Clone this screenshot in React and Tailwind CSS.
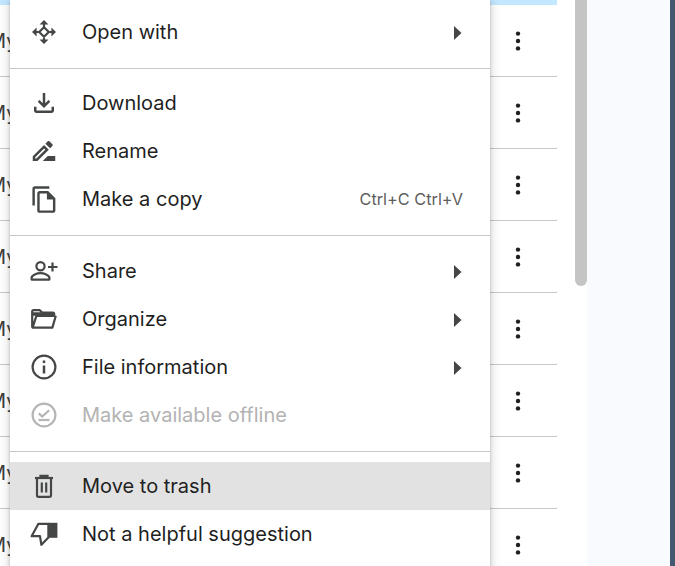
const FONT = "font-['Inter',sans-serif]";

const rows = [0, 1, 2, 3, 4, 5, 6, 7];

function Dots() {
  return (
    <svg width="30" height="30" viewBox="0 0 30 30" fill="#1f1f1f" className="shrink-0">
      <circle cx="15" cy="7.6" r="2.2" />
      <circle cx="15" cy="15" r="2.2" />
      <circle cx="15" cy="22.4" r="2.2" />
    </svg>
  );
}

function Arrow() {
  return (
    <svg width="8" height="14" viewBox="0 0 8 14" fill="#444746" className="mt-[2px] shrink-0">
      <path d="M0 0l7.5 7L0 14z" />
    </svg>
  );
}

const OpenWith = () => (
  <svg width="24" height="24" viewBox="0 0 24 24" fill="#444746">
    <path d="M12 0l4.5 4.6h-9zM12 24l-4.5-4.6h9zM0 12l4.6-4.5v9zM24 12l-4.6-4.5v9z" />
    <path d="M12 4v3.4M12 16.6V20M4 12h3.4M16.6 12H20M12 7.2L16.8 12 12 16.8 7.2 12z" fill="none" stroke="#444746" strokeWidth="2.2" />
  </svg>
);
const DownloadI = () => (
  <svg width="30" height="30" viewBox="0 0 24 24" fill="#444746">
    <path d="M18 15v3H6v-3H4v3c0 1.1.9 2 2 2h12c1.1 0 2-.9 2-2v-3h-2zm-1-4l-1.41-1.41L13 12.17V4h-2v8.17L8.41 9.59 7 11l5 5 5-5z" />
  </svg>
);
const RenameI = () => (
  <svg width="30" height="30" viewBox="0 0 24 24" fill="#444746">
    <path d="M15 16l-4 4h10v-4h-6zM12.06 7.19L3 16.25V20h3.75l9.06-9.06-3.75-3.75zM5.92 18H5v-.92l7.06-7.06.92.92L5.92 18zM18.71 8.04c.39-.39.39-1.02 0-1.41l-2.34-2.34a.9959.9959 0 0 0-1.41 0l-1.83 1.83 3.75 3.75 1.83-1.83z" />
  </svg>
);
const CopyI = () => (
  <svg width="29" height="29" viewBox="0 0 24 24" fill="#444746">
    <path d="M16 1H4c-1.1 0-2 .9-2 2v14h2V3h12V1zm-1 4H8c-1.1 0-1.99.9-1.99 2L6 21c0 1.1.89 2 1.99 2H19c1.1 0 2-.9 2-2V11l-6-6zM8 21V7h6v5h5v9H8z" />
  </svg>
);
const ShareI = () => (
  <svg width="28" height="20" viewBox="0 0 28 20" fill="none" stroke="#444746" strokeWidth="2.2">
    <circle cx="10.5" cy="5.3" r="4.1" />
    <path d="M1.6 18.6v-1.8c0-2.8 5.6-4.6 8.9-4.6s8.9 1.8 8.9 4.6v1.8z" strokeLinejoin="round" />
    <path d="M22.5 1.5v9M18 6h9.5" />
  </svg>
);
const FolderI = () => (
  <svg width="26" height="20" viewBox="0 0 26 20" fill="none" stroke="#444746" strokeWidth="2.2" strokeLinejoin="round">
    <path d="M1.2 18.6V2.6c0-.8.6-1.4 1.4-1.4h6.2l2.4 2.4h10.6c.8 0 1.4.6 1.4 1.4v1.8H5.4L1.6 18.6h19.8l3.4-11.8" />
    <path d="M2 5h20" strokeWidth="3.5" />
  </svg>
);
const InfoI = () => (
  <svg width="26" height="26" viewBox="0 0 26 26" fill="none" stroke="#444746" strokeWidth="2.2">
    <circle cx="13" cy="13" r="11.4" />
    <path d="M13 11.5v8" strokeWidth="2.5" />
    <path d="M13 6.5v2.6" strokeWidth="2.5" />
  </svg>
);
const OfflineI = () => (
  <svg width="26" height="26" viewBox="0 0 26 26" fill="none" stroke="#b5b5b5" strokeWidth="2.2">
    <circle cx="13" cy="13" r="11.4" />
    <path d="M7.8 11.4l3.4 3.2 7-6.4" />
    <path d="M7.5 18h11" />
  </svg>
);
const TrashI = () => (
  <svg width="20" height="24" viewBox="0 0 20 24" fill="none" stroke="#444746" strokeWidth="2.2">
    <path d="M1 4h18" />
    <path d="M6.5 4V1.8h7V4" />
    <path d="M3 4v17.2c0 .9.7 1.6 1.6 1.6h10.8c.9 0 1.6-.7 1.6-1.6V4" />
    <path d="M7.8 8.5v10M12.2 8.5v10" />
  </svg>
);
const ThumbI = () => (
  <svg width="28" height="25" viewBox="0 0 28 25" fill="none" stroke="#444746" strokeWidth="2.2" strokeLinejoin="round">
    <path d="M18 1.8H8.4L1.6 14.2H10l1.4 8.6 7-7.4V1.8z" />
    <path d="M18 0.8h9.4v15H18z" fill="#444746" stroke="none" />
  </svg>
);

function Item({ icon, label, right, muted, active }) {
  return (
    <div className={`flex h-12 items-center pl-[22px] pr-[28px] ${active ? "bg-[#e2e2e2]" : ""}`}>
      <span className="flex h-6 w-6 shrink-0 items-center justify-center overflow-visible [&>svg]:shrink-0">{icon}</span>
      <span className={`ml-[26px] text-[20px] leading-none ${muted ? "text-[#b3b3b3]" : "text-[#1f1f1f]"}`}>{label}</span>
      {right && <span className="ml-auto flex items-center">{right}</span>}
    </div>
  );
}

function Sep({ className }) {
  return <div className={`h-px bg-[#c7c7c7] ${className}`} />;
}

export default function App() {
  return (
    <div className={`relative flex h-[566px] w-[675px] overflow-hidden bg-white ${FONT}`}>
      <div className="w-[557px] shrink-0">
        <div className="h-[5px] bg-[#c2e7ff]" />
        {rows.map((r) => (
          <div key={r} className="flex h-[72px] items-center border-b border-[#c7c7c7] pr-[24.5px]">
            <span className="ml-[-12px] text-[20px] text-[#3c3c3c]">My Drive</span>
            <span className="ml-auto flex">
              <Dots />
            </span>
          </div>
        ))}
      </div>
      <div className="w-[30px] shrink-0 bg-white pl-[18px]">
        <div className="h-[286px] w-3 rounded-b-[6px] bg-[#c4c4c4]" />
      </div>
      <div className="flex-1 bg-[#f8fafd]" />
      <div className="w-[5px] shrink-0 bg-[#44596f]" />

      <div className="absolute left-[10px] top-0 h-[600px] w-[480px] bg-white pt-2 shadow-[0_4px_8px_3px_rgba(60,64,67,0.15),0_1px_3px_rgba(60,64,67,0.3)]">
        <Item icon={<OpenWith />} label="Open with" right={<Arrow />} />
        <Sep className="mb-[10px] mt-3" />
        <Item icon={<DownloadI />} label="Download" />
        <Item icon={<RenameI />} label="Rename" />
        <Item
          icon={<CopyI />}
          label="Make a copy"
          right={<span className="mr-[-1px] text-[16.3px] text-[#5e5e5e]">Ctrl+C Ctrl+V</span>}
        />
        <Sep className="mb-[11px] mt-3" />
        <Item icon={<ShareI />} label="Share" right={<Arrow />} />
        <Item icon={<FolderI />} label="Organize" right={<Arrow />} />
        <Item icon={<InfoI />} label="File information" right={<Arrow />} />
        <Item icon={<OfflineI />} label="Make available offline" muted />
        <Sep className="mb-[10px] mt-3" />
        <Item icon={<TrashI />} label="Move to trash" active />
        <Item icon={<ThumbI />} label="Not a helpful suggestion" />
      </div>
    </div>
  );
}
